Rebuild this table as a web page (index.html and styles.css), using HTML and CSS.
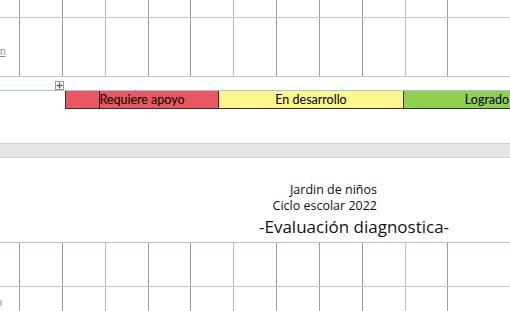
FILE: index.html
```html
<!DOCTYPE html>
<html lang="es">
<head>
  <meta charset="UTF-8" />
  <meta name="viewport" content="width=device-width, initial-scale=1.0" />
  <title>Evaluación diagnostica</title>
  <link rel="stylesheet" href="styles.css">
</head>
<body>
  <div class="doc">

    <!-- final de la hoja anterior -->
    <section class="sheet sheet-end">
      <div class="grid">
        <div class="row row-short">
          <div class="cell first"></div>
          <div class="cell"></div><div class="cell"></div><div class="cell light"></div>
          <div class="cell"></div><div class="cell"></div><div class="cell light"></div>
          <div class="cell"></div><div class="cell"></div><div class="cell"></div>
          <div class="cell light"></div><div class="cell"></div>
        </div>
        <div class="row row-tall">
          <div class="cell first"><span class="cut-word">n</span></div>
          <div class="cell"></div><div class="cell"></div><div class="cell light"></div>
          <div class="cell"></div><div class="cell"></div><div class="cell light"></div>
          <div class="cell"></div><div class="cell"></div><div class="cell"></div>
          <div class="cell light"></div><div class="cell"></div>
        </div>
      </div>

      <div class="handle-row">
        <span class="move-handle">
          <svg width="9" height="9" viewBox="0 0 9 9">
            <rect x="0.5" y="0.5" width="8" height="8" fill="#fff" stroke="#9a9a9a"/>
            <path d="M4.5 1.8v5.4M1.8 4.5h5.4" stroke="#555" stroke-width="1"/>
            <path d="M4.5 1.5l-1.2 1.2h2.4zM4.5 7.5l-1.2-1.2h2.4zM1.5 4.5l1.2-1.2v2.4zM7.5 4.5l-1.2-1.2v2.4z" fill="#555"/>
          </svg>
        </span>
      </div>
      <div class="margin-line"></div>

      <div class="legend">
        <div class="level level-red"><span class="caret"></span>Requiere apoyo</div>
        <div class="level level-yellow">En desarrollo</div>
        <div class="level level-green">Logrado</div>
      </div>
    </section>

    <div class="page-gap"></div>

    <!-- encabezado de la hoja siguiente -->
    <section class="sheet sheet-start">
      <div class="heading">
        <div class="heading-sub">
          <p>Jardin de niños</p>
          <p>Ciclo escolar 2022</p>
        </div>
        <p class="heading-title">-Evaluación diagnostica-</p>
      </div>
      <div class="margin-line"></div>

      <div class="grid">
        <div class="row row-mid">
          <div class="cell first"></div>
          <div class="cell"></div><div class="cell"></div><div class="cell light"></div>
          <div class="cell"></div><div class="cell"></div><div class="cell light"></div>
          <div class="cell"></div><div class="cell"></div><div class="cell"></div>
          <div class="cell light"></div><div class="cell"></div>
        </div>
        <div class="row row-mid open">
          <div class="cell first"><span class="cut-mark"></span></div>
          <div class="cell"></div><div class="cell"></div><div class="cell light"></div>
          <div class="cell"></div><div class="cell"></div><div class="cell light"></div>
          <div class="cell"></div><div class="cell"></div><div class="cell"></div>
          <div class="cell light"></div><div class="cell"></div>
        </div>
      </div>
    </section>

  </div>
</body>
</html>
```

FILE: styles.css
```css
body {
  margin: 0;
  background: #fff;
  font-family: "Lato", "Liberation Sans", sans-serif;
  overflow: hidden;
}

.doc {
  width: 510px;
  height: 311px;
  overflow: hidden;
}

p {
  margin: 0;
}

/* tabla de la planeacion */
.grid {
  display: flex;
  flex-direction: column;
}

.row {
  display: flex;
  border-bottom: 1px solid #c4c4c4;
}

.row-short { height: 17px; }
.row-tall  { height: 58px; }
.row-mid   { height: 43px; }
.row.open  { border-bottom: none; }

.cell {
  flex: 0 0 43px;
  box-sizing: border-box;
  border-left: 1px solid #9c9c9c;
}

.cell.first {
  flex-basis: 19px;
  border-left: none;
  position: relative;
}

.cell.light {
  border-left-color: #bdbdbd;
}

.cell:nth-child(5),
.cell:nth-child(11) {
  flex-basis: 42px;
}

.cut-word {
  position: absolute;
  left: 0;
  top: 28px;
  font-family: "Liberation Sans", sans-serif;
  font-size: 10px;
  color: #8a8a8a;
  text-decoration: underline;
}

.cut-mark {
  position: absolute;
  left: 0;
  top: 13px;
  width: 2px;
  height: 6px;
  background: #c8c8c8;
}

.handle-row {
  height: 9px;
  padding-top: 4px;
  padding-left: 55px;
}

.move-handle {
  display: block;
  width: 9px;
  height: 9px;
}

.move-handle svg {
  display: block;
}

.margin-line {
  height: 1px;
  background: #a6c5e8;
}

/* niveles de desempeño */
.legend {
  display: flex;
  margin-left: 65px;
  height: 17px;
  border-left: 1px solid #333;
  border-bottom: 1px solid #333;
}

.level {
  box-sizing: border-box;
  display: flex;
  align-items: center;
  justify-content: center;
  font-size: 12.5px;
  color: #000;
  position: relative;
}

.level-red {
  flex: 0 0 153px;
  background: #eb5760;
  border-right: 1px solid #333;
}

.level-yellow {
  flex: 0 0 185px;
  background: #fdf68a;
  border-right: 1px solid #333;
}

.level-green {
  flex: 0 0 166px;
  background: #90d04f;
}

.caret {
  position: absolute;
  left: 33px;
  top: 0;
  bottom: 0;
  width: 1px;
  background: #000;
}

.page-gap {
  margin-top: 34px;
  height: 13px;
  background: #e4e4e4;
  border-top: 1px solid #cfcfcf;
  border-bottom: 1px solid #d6d6d6;
}

/* encabezado */
.heading {
  box-sizing: border-box;
  height: 84px;
  padding-top: 24px;
  padding-left: 259px;
  font-family: "Open Sans", sans-serif;
  color: #111;
}

.heading-sub {
  width: 118px;
  text-align: right;
  font-size: 12.5px;
  line-height: 16px;
}

.heading-title {
  margin-top: 2px;
  font-size: 17px;
  line-height: 22px;
  white-space: nowrap;
}
```
